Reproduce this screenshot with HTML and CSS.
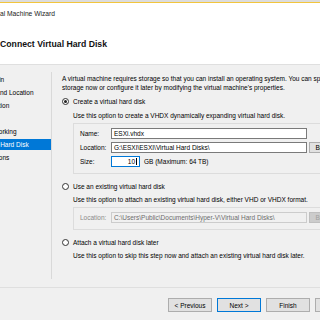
FILE: index.html
```html
<!DOCTYPE html>
<html lang="en">
<head>
  <meta charset="UTF-8">
  <meta name="viewport" content="width=device-width, initial-scale=1.0">
  <title>New Virtual Machine Wizard</title>
  <link rel="stylesheet" href="styles.css">
</head>
<body>
  <div class="window">
    <div class="top">
      <div class="title-bar"><span>New Virtual Machine Wizard</span></div>
      <h1 class="heading">Connect Virtual Hard Disk</h1>
    </div>

    <div class="main">
      <ul class="steps">
        <li>Before You Begin</li>
        <li>Specify Name and Location</li>
        <li>Specify Generation</li>
        <li>Assign Memory</li>
        <li>Configure Networking</li>
        <li class="current">Connect Virtual Hard Disk</li>
        <li>Installation Options</li>
        <li>Summary</li>
      </ul>

      <div class="content">
        <p class="intro">A virtual machine requires storage so that you can install an operating system. You can specify the<br>storage now or configure it later by modifying the virtual machine's properties.</p>

        <div class="option first">
          <span class="radio checked"></span>
          <span>Create a virtual hard disk</span>
        </div>
        <div class="hint">Use this option to create a VHDX dynamically expanding virtual hard disk.</div>
        <div class="group">
          <div class="field">
            <span class="label">Name:</span>
            <span class="textbox">ESXi.vhdx</span>
          </div>
          <div class="field">
            <span class="label">Location:</span>
            <span class="textbox">G:\ESXI\ESXI\Virtual Hard Disks\</span>
            <span class="btn browse">Browse...</span>
          </div>
          <div class="field">
            <span class="label">Size:</span>
            <span class="textbox size">10<span class="caret"></span></span>
            <span class="unit">GB (Maximum: 64 TB)</span>
          </div>
        </div>

        <div class="option">
          <span class="radio"></span>
          <span>Use an existing virtual hard disk</span>
        </div>
        <div class="hint">Use this option to attach an existing virtual hard disk, either VHD or VHDX format.</div>
        <div class="group disabled">
          <div class="field">
            <span class="label">Location:</span>
            <span class="textbox">C:\Users\Public\Documents\Hyper-V\Virtual Hard Disks\</span>
            <span class="btn browse">Browse...</span>
          </div>
        </div>

        <div class="option">
          <span class="radio"></span>
          <span>Attach a virtual hard disk later</span>
        </div>
        <div class="hint">Use this option to skip this step now and attach an existing virtual hard disk later.</div>
      </div>
    </div>

    <div class="footer">
      <span class="btn">&lt; Previous</span>
      <span class="btn default">Next &gt;</span>
      <span class="btn">Finish</span>
      <span class="btn">Cancel</span>
    </div>
  </div>
</body>
</html>
```

FILE: styles.css
```css
body {
  margin: 0;
  width: 320px;
  height: 320px;
  overflow: hidden;
  background-color: #f0f0f0;
  font-family: 'Liberation Sans', Arial, sans-serif;
  font-size: 6.5px;
  color: #000;
}
.window {
  border-top: 2px solid #dcdcdc;
}
.top {
  height: 61px;
  background: white;
  border-top: 1px solid #f2c53d;
  border-bottom: 1px solid #dfdfdf;
}
.title-bar {
  display: flex;
  justify-content: flex-end;
  align-items: center;
  width: 55px;
  height: 18px;
  padding-top: 1px;
  font-size: 6.7px;
  color: #222;
  white-space: nowrap;
}
.heading {
  margin: 17px 0 0;
  font-size: 8.7px;
  font-weight: bold;
  line-height: 10px;
  color: #111;
  white-space: nowrap;
}
.main {
  display: flex;
  height: 222px;
  padding: 7px 0 8px;
  box-sizing: border-box;
}
.steps {
  flex: none;
  width: 51px;
  margin: 0;
  padding: 2px 0 0;
  list-style: none;
  border-right: 1px solid #d9d9d9;
  overflow: hidden;
}
.steps li {
  height: 11px;
  line-height: 11px;
  margin-bottom: 2px;
  white-space: nowrap;
  text-indent: -46px;
}
.steps li.current {
  background-color: #0078d7;
  color: white;
}
.content {
  flex: 1;
  min-width: 0;
  padding: 2px 0 0 10px;
  white-space: nowrap;
}
.intro {
  margin: 0;
  line-height: 9px;
}
.option {
  display: flex;
  align-items: center;
  height: 9px;
  margin-top: 8px;
}
.option.first { margin-top: 5px; }
.radio {
  display: flex;
  align-items: center;
  justify-content: center;
  width: 7px;
  height: 7px;
  box-sizing: border-box;
  margin-right: 4px;
  border: 1px solid #333;
  border-radius: 50%;
  background: white;
}
.radio.checked::after {
  content: '';
  width: 3px;
  height: 3px;
  border-radius: 50%;
  background: #222;
}
.hint {
  margin-top: 4px;
  padding-left: 11px;
  line-height: 9px;
}
.option.first + .hint { margin-top: 5px; }
.group {
  margin: 3px 0 0 11px;
  padding: 4px 0 6px 6px;
  border: 1px solid #dcdcdc;
  border-right: none;
}
.field {
  display: flex;
  align-items: center;
  height: 11px;
}
.field + .field { margin-top: 3px; }
.label {
  flex: none;
  width: 31px;
}
.textbox {
  flex: none;
  width: 196px;
  height: 11px;
  box-sizing: border-box;
  padding-left: 2px;
  border: 1px solid #7a7a7a;
  background: white;
  line-height: 9px;
  overflow: hidden;
}
.textbox.size {
  width: 29px;
  padding: 0 2px 0 0;
  border-color: #0078d7;
  text-align: right;
}
.caret {
  display: inline-block;
  width: 1px;
  height: 7px;
  margin-left: 1px;
  background: black;
  vertical-align: -1px;
}
.unit { margin-left: 4px; }
.btn {
  display: flex;
  align-items: center;
  justify-content: center;
  flex: none;
  width: 44px;
  height: 14px;
  box-sizing: border-box;
  border: 1px solid #adadad;
  background-color: #e1e1e1;
}
.btn.browse {
  width: 40px;
  height: 11px;
  margin-left: 2px;
}
.btn.default {
  border-color: #0078d7;
}
.disabled { color: #8a8a8a; }
.disabled .textbox {
  border-color: #cccccc;
  background: #f0f0f0;
  color: #6d6d6d;
}
.disabled .btn {
  border-color: #bfbfbf;
  background-color: #cccccc;
  color: #a0a0a0;
}
.footer {
  display: flex;
  gap: 5px;
  padding: 10px 0 0 168px;
  border-top: 1px solid #dfdfdf;
  white-space: nowrap;
}
```
